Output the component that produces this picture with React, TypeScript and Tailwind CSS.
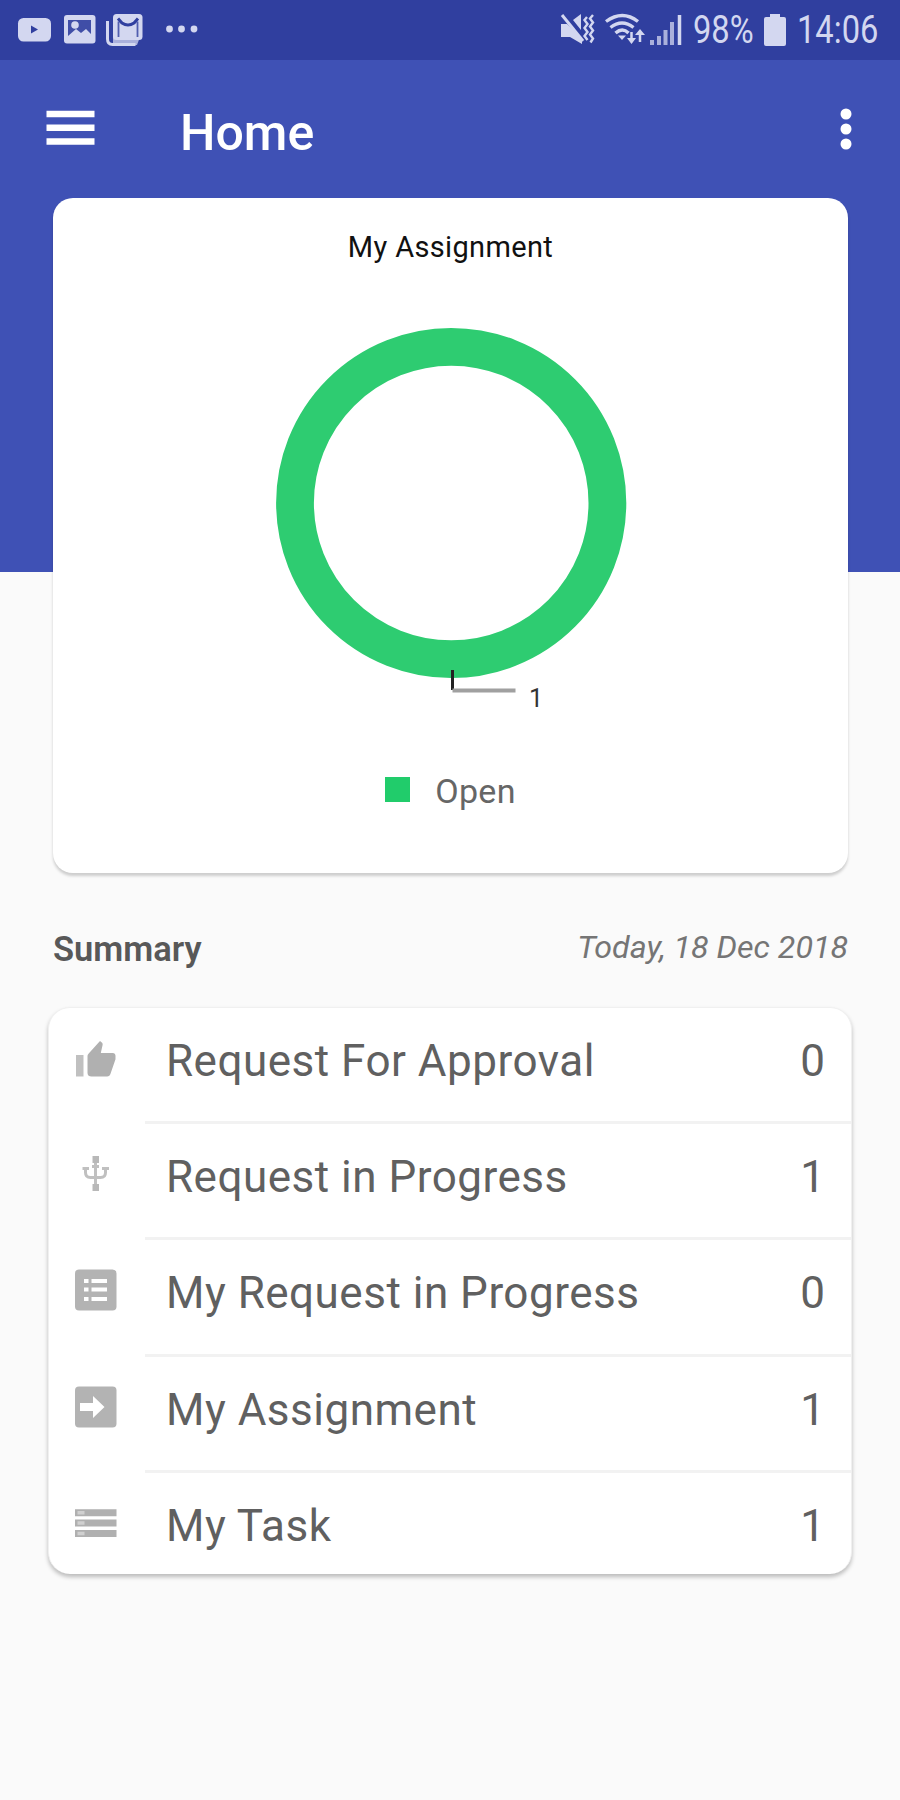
import React from 'react';

interface SummaryItem {
  id: number;
  label: string;
  count: number;
  icon: React.ReactNode;
}

const ThumbIcon = () => (
  <svg viewBox="0 0 42 42" className="w-[42px] h-[42px]" fill="#b0b0b0">
    <path d="M1 18h7.500v21.500H1z" opacity="0.8" />
    <path d="M12.500 19.500c0-1.200.4-2 1.200-2.900L25 4l1.800 1.600c.8.8 1 1.500.8 2.500L25.800 16h12c1.600 0 2.700 1.200 2.700 2.700v3.600l-5 14.500c-.6 1.700-1.600 2.700-3.300 2.700H16.500c-2.300 0-4-1.300-4-3.600z" />
  </svg>
);

const UsbIcon = () => (
  <svg viewBox="0 0 42 42" className="w-[42px] h-[42px]" fill="none" stroke="#c0c0c0" strokeWidth="3">
    <path d="M20.500 7v28M10.500 15v4.500q0 5 5 5h10q5 0 5-5V15" />
    <path d="M7.500 15.500h6.500M27 15.500h7M17 13.500h7" />
    <path d="M17.500 3h6.500v7h-6.500zM17.500 31h6.500v7h-6.500z" fill="#b8b8b8" stroke="none" />
  </svg>
);

const ListBoxIcon = () => (
  <svg viewBox="0 0 42 42" className="w-[42px] h-[42px]">
    <rect x="0" y="0.500" width="41.500" height="41" rx="4" fill="#b3b3b3" />
    <path d="M9 12h4.500M16.500 12h15.500M9 20.500h4.500M16.500 20.500h15.500M9 30h4.500M16.500 30h15.500" stroke="#fff" strokeWidth="4.200" />
  </svg>
);

const ArrowBoxIcon = () => (
  <svg viewBox="0 0 42 42" className="w-[42px] h-[42px]">
    <rect x="0" y="0.500" width="41.500" height="41" rx="4" fill="#b3b3b3" />
    <path d="M5 17h13V10l11.500 11-11.500 11v-7H5z" fill="#fff" />
  </svg>
);

const StorageIcon = () => (
  <svg viewBox="0 0 42 42" className="w-[42px] h-[42px]">
    <path d="M0 10.700h41.500M0 21h41.500M0 31.500h41.500" stroke="#b0b0b0" strokeWidth="7" />
    <path d="M2.500 10.700h7M2.500 21h7M2.500 31.500h7" stroke="#d0d0d0" strokeWidth="3.500" />
  </svg>
);

const items: SummaryItem[] = [
  { id: 1, label: 'Request For Approval', count: 0, icon: <ThumbIcon /> },
  { id: 2, label: 'Request in Progress', count: 1, icon: <UsbIcon /> },
  { id: 3, label: 'My Request in Progress', count: 0, icon: <ListBoxIcon /> },
  { id: 4, label: 'My Assignment', count: 1, icon: <ArrowBoxIcon /> },
  { id: 5, label: 'My Task', count: 1, icon: <StorageIcon /> },
];

const StatusBar = () => (
  <div className="h-[60px] bg-[#303f9f] flex items-center justify-between pl-[17px] pr-[20px] text-[#d3d7f0]">
    {/* Notifications */}
    <svg viewBox="0 0 184 36" className="w-[184px] h-[36px]" fill="#d3d7f0">
      <rect x="1" y="6" width="33" height="23.500" rx="5.500" />
      <path d="M14 13.500l7 4-7 4z" fill="#303f9f" />
      <rect x="47" y="3" width="31.500" height="28.500" rx="3" />
      <path d="M51 8h23v14l-5-5-5 4-5-4-8 7z" fill="#303f9f" opacity="0.9" />
      <circle cx="58" cy="13" r="3.800" />
      <path d="M90.500 9v18c0 3.500 2 5.500 5 5.500h23" fill="none" stroke="#d3d7f0" strokeWidth="3" />
      <path d="M96 25h27l-3 8H96z" opacity="0.75" />
      <rect x="96" y="2" width="29.500" height="26" rx="3.500" />
      <path d="M101.500 25V9.500M120.500 25V9.500" fill="none" stroke="#303f9f" strokeWidth="1.800" opacity="0.8" />
      <path d="M101 6.500l4 4.500q6 4 12 0l4-4.500" fill="none" stroke="#303f9f" strokeWidth="3" />
      <circle cx="152.500" cy="17" r="3.400" />
      <circle cx="164.500" cy="17" r="3.400" />
      <circle cx="177" cy="17" r="3.400" />
    </svg>

    {/* System state */}
    <div className="flex items-center">
      <svg viewBox="0 0 124 36" className="w-[124px] h-[36px]" fill="none" stroke="#d3d7f0">
        <path d="M1 12h6l15 14v6L10 25H1zM13 8l8-6v16z" fill="#d3d7f0" stroke="none" />
        <path d="M2 3l21 26" strokeWidth="3" />
        <path d="M27 5l-2.500 3 3 4-3 4 3 4-3 4 3 4M33 3l-3 3.500 3 4-3 4 3 4-3 4 3 4-2.500 4" strokeWidth="2.400" />
        <path d="M46 9.500q16.500-12 32 0M50.500 15.500q11.500-9 23 0M55.500 21q7-6 13 0" strokeWidth="3.400" />
        <path d="M58 23.500h8L62 28z" fill="#d3d7f0" stroke="none" />
        <path d="M67 26h9l-4.500 6zM75 23h10l-5-6z" fill="#d3d7f0" stroke="none" />
        <path d="M71.500 20v7M80 22v8" strokeWidth="2.500" />
        <path d="M92 33v-5M99 33v-9M105.500 33V18M112 33V10" strokeWidth="4" opacity="0.75" />
        <path d="M119.500 33V3" strokeWidth="3.500" />
      </svg>
      <div className="w-[62px] ml-[9px] text-[38px] leading-[60px]">
        <span className="inline-block origin-left scale-x-[0.86]">98%</span>
      </div>
      <svg viewBox="0 0 24 34" className="w-[24px] h-[34px] ml-[8px] mr-[10px]" fill="#d3d7f0">
        <path d="M7 1h10v3h4a2 2 0 0 1 2 2v25a2 2 0 0 1-2 2H3a2 2 0 0 1-2-2V6a2 2 0 0 1 2-2h4z" />
      </svg>
      <div className="w-[83px] text-[38px] leading-[60px]">
        <span className="inline-block origin-left scale-x-[0.86]">14:06</span>
      </div>
    </div>
  </div>
);

const AssignmentCard = () => (
  <div className="ml-[53px] mr-[52px] -mt-[374px] h-[675px] bg-white rounded-[20px] shadow-[0_3px_3px_rgba(0,0,0,0.18)] flex flex-col items-center">
    <h2 className="mt-[29px] text-[29px] leading-[40px] tracking-[0.35px] text-[#111]">My Assignment</h2>
    <svg viewBox="0 0 400 400" className="w-[400px] h-[400px] mt-[53px]">
      <circle cx="200.200" cy="183" r="156.200" fill="none" stroke="#2ecc71" strokeWidth="37.800" />
      <path d="M201.500 350v20" stroke="#222" strokeWidth="3" />
      <path d="M201.500 370.500h63" stroke="#a0a0a0" strokeWidth="4" />
      <text x="278" y="387" fontSize="25" fill="#333">1</text>
    </svg>
    {/* Legend */}
    <div className="flex items-center mt-[47px] h-[44px]">
      <div className="w-[25px] h-[25px] bg-[#21cc6b]" />
      <span className="ml-[25px] pt-[3px] text-[34px] leading-[44px] tracking-[0.3px] text-[#666]">Open</span>
    </div>
  </div>
);

const SummaryList = () => (
  <div className="mx-[48px] mt-[27px] h-[567px] bg-white rounded-[22px] border border-[#f0f0f0] border-b-0 shadow-[0_3px_4px_rgba(0,0,0,0.25)] overflow-hidden">
    {items.map((item, index) => (
      <div key={item.id} className="flex h-[116.200px]">
        <div className="w-[96px] pt-[29px] pl-[26px]">{item.icon}</div>
        <div className={`flex-1 flex justify-between pl-[21px] pr-[26px] text-[44px] leading-[106px] text-[#606060] ${index < items.length - 1 ? 'border-b-[3px] border-[#f2f2f2]' : ''}`}>
          <span className="tracking-[0.5px]">{item.label}</span>
          <span>{item.count}</span>
        </div>
      </div>
    ))}
  </div>
);

export default function App() {
  return (
    <div className="w-[900px] h-[1800px] bg-[#fafafa] font-['Roboto',sans-serif] overflow-hidden">
      <header className="h-[572px] bg-[#3f51b5]">
        <StatusBar />
        <div className="flex items-center h-[138px] pl-[46px] pr-[48px]">
          <svg viewBox="0 0 50 40" className="w-[50px] h-[40px]">
            <path d="M0.500 5h48M0.500 18.800h48M0.500 32.500h48" stroke="#fff" strokeWidth="6.500" />
          </svg>
          <h1 className="ml-[84px] pt-[7px] flex-1 text-[50px] font-medium leading-[60px] text-white">Home</h1>
          <svg viewBox="0 0 12 44" className="w-[12px] h-[44px]" fill="#fff">
            <circle cx="6" cy="7" r="5.500" />
            <circle cx="6" cy="22" r="5.500" />
            <circle cx="6" cy="37" r="5.500" />
          </svg>
        </div>
      </header>

      <AssignmentCard />

      <div className="mt-[53px] ml-[53px] mr-[52px] h-[54px] flex justify-between">
        <span className="text-[34.500px] leading-[42px] font-semibold text-[#585858] mt-[2px]">Summary</span>
        <span className="text-[32.200px] leading-[42px] italic text-[#757575]">Today, 18 Dec 2018</span>
      </div>

      <SummaryList />
    </div>
  );
}
